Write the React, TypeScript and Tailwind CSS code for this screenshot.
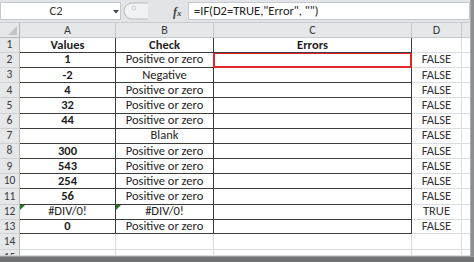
import React from "react";

const rowHeights = [15, 15, 16, 15, 16, 15, 15, 16, 15, 15, 16, 15, 15, 16, 6];

type Row = { a: string; b: string; d: string; aBold: boolean; aErr?: boolean };

const rows: Row[] = [
  { a: "Values", b: "Check", d: "", aBold: true },
  { a: "1", b: "Positive or zero", d: "FALSE", aBold: true },
  { a: "-2", b: "Negative", d: "FALSE", aBold: true },
  { a: "4", b: "Positive or zero", d: "FALSE", aBold: true },
  { a: "32", b: "Positive or zero", d: "FALSE", aBold: true },
  { a: "44", b: "Positive or zero", d: "FALSE", aBold: true },
  { a: "", b: "Blank", d: "FALSE", aBold: true },
  { a: "300", b: "Positive or zero", d: "FALSE", aBold: true },
  { a: "543", b: "Positive or zero", d: "FALSE", aBold: true },
  { a: "254", b: "Positive or zero", d: "FALSE", aBold: true },
  { a: "56", b: "Positive or zero", d: "FALSE", aBold: true },
  { a: "#DIV/0!", b: "#DIV/0!", d: "TRUE", aBold: false, aErr: true },
  { a: "0", b: "Positive or zero", d: "FALSE", aBold: true },
];

const font = { fontFamily: "Carlito, Lato, 'Liberation Sans', sans-serif" };

function ErrTri() {
  return (
    <svg className="absolute left-0 top-0" width="5" height="5" viewBox="0 0 5 5">
      <polygon points="0,0 5,0 0,5" fill="#1f7a1f" />
    </svg>
  );
}

export default function App() {
  return (
    <div className="w-[474px] h-[262px] overflow-hidden bg-[#7c7c7c] flex flex-col text-[#1e1e1e]" style={font}>
      <div className="flex h-[256px]">
        <div className="w-[470px] flex flex-col bg-white">
          {/* formula bar */}
          <div className="h-[23px] flex bg-[#e2e4e7] pt-[2px] pb-[2px] border-b border-[#c9cbce]">
            <div className="w-[121px] h-[18px] bg-white flex items-center relative border border-[#c5c8cc]">
              <span className="w-[110px] text-center text-[12.5px] text-[#333]">C2</span>
              <svg className="absolute left-[112px] top-[7px]" width="6" height="4" viewBox="0 0 6 4">
                <polygon points="0,0 6,0 3,3.5" fill="#444" />
              </svg>
            </div>
            <div className="w-[67px] h-[18px] flex items-center relative">
              <svg className="absolute left-[2px] top-[0px]" width="26" height="18" viewBox="0 0 26 18">
                <path d="M25 1 H9 A8 8 0 0 0 9 17 H25" fill="#f1f2f4" stroke="#b7bbc0" strokeWidth="1" />
                <circle cx="11" cy="6" r="2" fill="none" stroke="#c2c5c9" strokeWidth="0.8" />
              </svg>
              <span className="absolute left-[52px] top-[1px] text-[12px] italic font-bold text-[#444]" style={{ fontFamily: "'Liberation Serif', serif" }}>
                f<span className="text-[9px]">x</span>
              </span>
            </div>
            <div className="flex-1 h-[18px] bg-white border border-[#c5c8cc] flex items-center pl-[5px] text-[12.5px] text-[#222]">
              =IF(D2=TRUE,"Error", "")
            </div>
          </div>
          {/* column headers */}
          <div className="h-[15px] flex bg-[#e6e7e9] text-[12px] text-[#3a3a3a]">
            <div className="w-[20px] h-full border-r border-b border-[#b3b6ba] relative">
              <svg className="absolute right-[2px] bottom-[2px]" width="9" height="9" viewBox="0 0 9 9">
                <polygon points="9,0 9,9 0,9" fill="#c2c5c8" />
              </svg>
            </div>
            {[
              ["A", "w-[96px]"],
              ["B", "w-[98px]"],
              ["C", "w-[198px]"],
              ["D", "w-[50px]"],
            ].map(([l, w]) => (
              <div key={l} className={`${w} h-full border-r border-b border-[#c4c7cb] flex items-center justify-center`}>
                {l}
              </div>
            ))}
            <div className="flex-1 h-full border-b border-[#c4c7cb]" />
          </div>
          {/* rows */}
          {rowHeights.map((h, i) => {
            const r = rows[i];
            const n = i + 1;
            const dark = !!r;
            const last = i === rowHeights.length - 1;
            return (
              <div key={i} className="flex text-[12.5px] overflow-hidden" style={{ height: h }}>
                <div className={`w-[20px] h-full bg-[#e6e7e9] border-r border-b border-r-[#b3b6ba] border-b-[#cfd2d5] flex justify-center text-[#3a3a3a] text-[11.5px] overflow-hidden ${last ? "items-start pt-[2px] leading-[10px]" : "items-center"}`}>
                  {n}
                </div>
                <div className={`w-[96px] h-full border-r border-b flex items-center justify-center relative ${dark ? "border-[#3c3c3c]" : "border-[#dadcdf]"} ${r && r.aBold ? "font-bold" : ""}`}>
                  {r && r.aErr ? <ErrTri /> : null}
                  {r ? r.a : ""}
                </div>
                <div className={`w-[98px] h-full border-r border-b flex items-center justify-center relative ${dark ? "border-[#3c3c3c]" : "border-[#dadcdf]"} ${i === 0 ? "font-bold" : ""}`}>
                  {r && r.aErr ? <ErrTri /> : null}
                  {r ? r.b : ""}
                </div>
                <div className={`w-[198px] h-full border-r border-b flex items-center justify-center relative ${dark ? "border-[#3c3c3c]" : "border-[#dadcdf]"} ${i === 0 ? "font-bold" : ""}`}>
                  {i === 0 ? "Errors" : ""}
                  {i === 1 ? <div className="absolute -top-[1px] -left-[1px] -right-[1px] bottom-[-1px] border-2 border-[#e3262b]" /> : null}
                </div>
                <div className="w-[50px] h-full border-r border-b border-[#dadcdf] flex items-center justify-center text-[#333]">
                  {r ? r.d : ""}
                </div>
                <div className="flex-1 h-full border-b border-[#dadcdf]" />
              </div>
            );
          })}
        </div>
        <div className="flex-1 bg-[#8d8f92] border-l border-[#a9abae]" />
      </div>
      <div className="flex-1 bg-[#6f7174] border-t border-[#9a9c9f]" />
    </div>
  );
}
